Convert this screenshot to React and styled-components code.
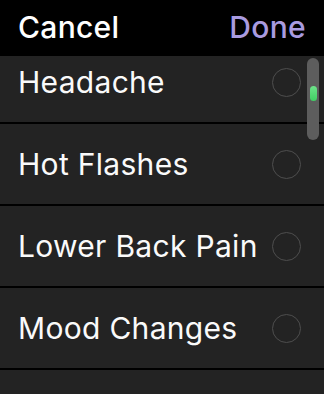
import React from 'react';
import styled, { createGlobalStyle } from 'styled-components';

const GlobalStyle = createGlobalStyle`
  html, body {
    margin: 0;
    padding: 0;
    background: #000;
  }
  body {
    font-family: Inter, "Liberation Sans", sans-serif;
    -webkit-font-smoothing: antialiased;
  }
`

// the last row is only scrolled into view by its top edge
const symptoms = ['Headache', 'Hot Flashes', 'Lower Back Pain', 'Mood Changes', '']

function App() {
  return (
    <>
      <GlobalStyle />
      <Screen>
        <Header>
          <HeaderButton>Cancel</HeaderButton>
          <HeaderButton primary>Done</HeaderButton>
        </Header>
        <ListViewport>
          <List>
            {symptoms.map((name, i) => (
              <Row key={i}>
                {name && <RowLabel>{name}</RowLabel>}
                {name && <Check />}
              </Row>
            ))}
          </List>
          <ScrollTrack>
            <ScrollThumb />
          </ScrollTrack>
        </ListViewport>
      </Screen>
    </>
  )
}

const Screen = styled.div`
  width: 324px;
  height: 394px;
  background: #000;
  display: flex;
  flex-direction: column;
  overflow: hidden;
`

const Header = styled.div`
  height: 56px;
  flex-shrink: 0;
  display: flex;
  align-items: center;
  justify-content: space-between;
  padding: 0 18px 2px 18px;
  box-sizing: border-box;
`

const HeaderButton = styled.div`
  font-size: 30px;
  font-weight: 500;
  letter-spacing: 0.3px;
  color: ${(p) => (p.primary ? '#a99be0' : '#ffffff')};
`

const ListViewport = styled.div`
  position: relative;
  flex: 1;
  overflow: hidden;
`

const List = styled.div`
  display: flex;
  flex-direction: column;
  gap: 2px;
  margin-top: -14px;
`

const Row = styled.div`
  height: 80px;
  flex-shrink: 0;
  background: #232323;
  display: flex;
  align-items: center;
  justify-content: space-between;
  padding: 0 23px 0 18px;
  box-sizing: border-box;
`

const RowLabel = styled.div`
  font-size: 30px;
  font-weight: 400;
  letter-spacing: 0.3px;
  color: #fafafa;
`

const Check = styled.div`
  width: 27px;
  height: 27px;
  border-radius: 50%;
  border: 1.8px solid #4e4e4e;
`

const ScrollTrack = styled.div`
  position: absolute;
  top: 2px;
  left: 307px;
  width: 12px;
  height: 82px;
  border-radius: 6px;
  background: #5d5d5d;
`

const ScrollThumb = styled.div`
  position: absolute;
  top: 28px;
  left: 2.5px;
  width: 7px;
  height: 15px;
  border-radius: 4px;
  background: linear-gradient(#6ee38a, #3fcf63);
`

export default App;
